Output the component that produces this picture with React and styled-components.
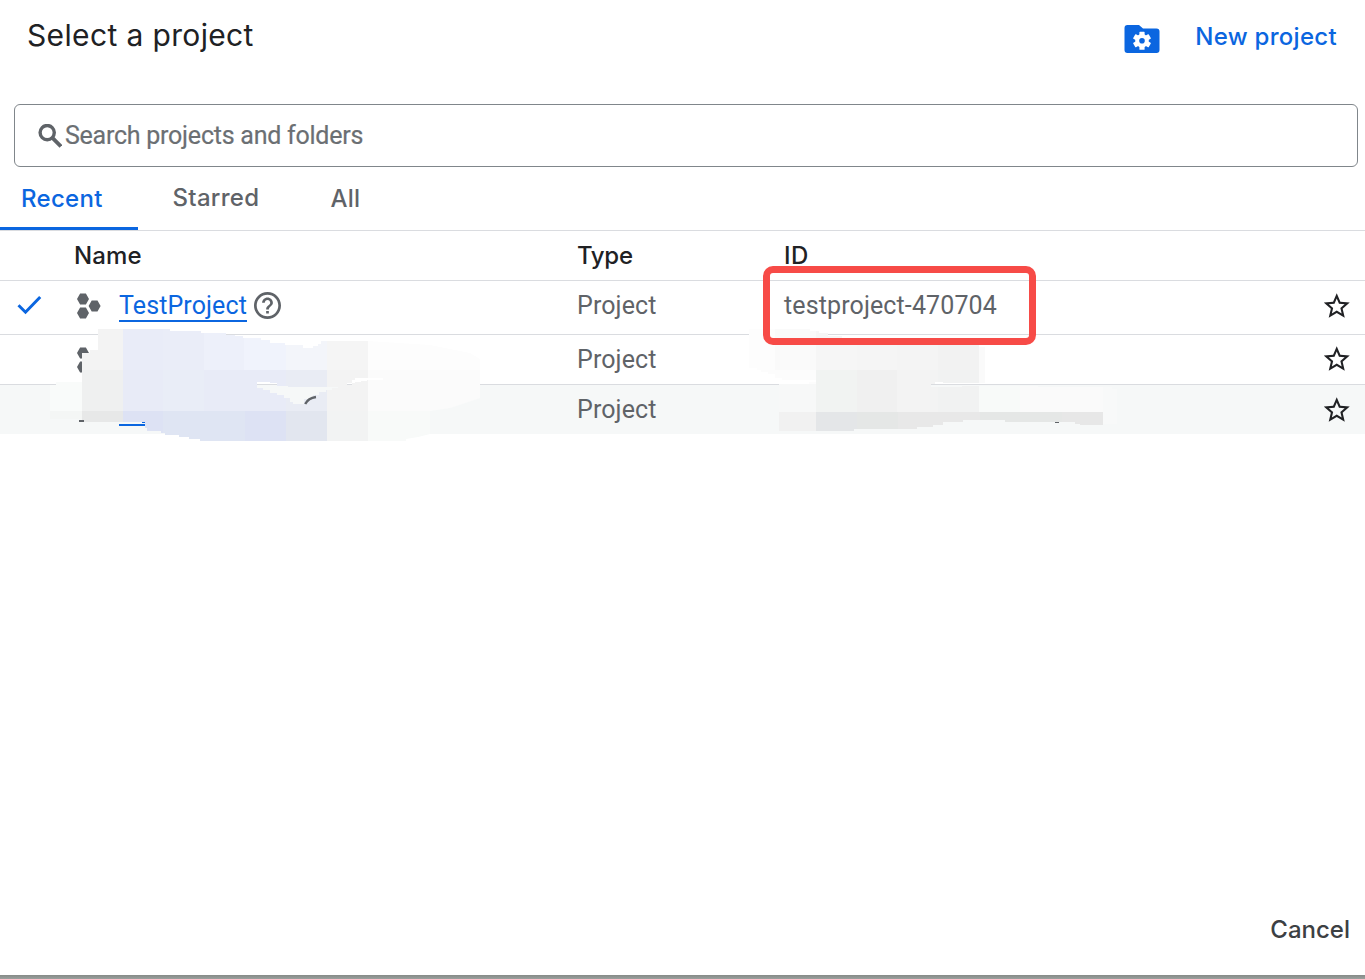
import React from "react";
import styled, { createGlobalStyle } from "styled-components";

const GlobalStyle = createGlobalStyle`
  * { box-sizing: border-box; }
  html, body { margin: 0; padding: 0; background: #fff; }
  body { font-family: Roboto, "Liberation Sans", sans-serif; overflow: hidden; }
`;

const display = `font-family: Inter, Roboto, sans-serif;`;

const Dialog = styled.main`
  position: relative;
  display: flex;
  flex-direction: column;
  width: 1365px;
  height: 979px;
  background: linear-gradient(#858a87, #9ba09d) bottom / 100% 4px no-repeat #fff;
  padding-bottom: 4px;
`;

const Header = styled.header`
  display: flex;
  align-items: flex-start;
  height: 104px;
  padding: 15px 28px 0 27px;
`;

const Title = styled.h1`
  ${display}
  flex: 1;
  margin: 0;
  font-size: 30px;
  font-weight: 400;
  line-height: 40px;
  letter-spacing: 0.36px;
  color: #202124;
`;

const NewProject = styled.button`
  ${display}
  display: flex;
  align-items: flex-start;
  gap: 35px;
  margin: 6px 0 0;
  padding: 0;
  border: 0;
  background: none;
  font-size: 24px;
  font-weight: 500;
  line-height: 32px;
  letter-spacing: 0.3px;
  color: #0b66e0;
  svg { margin-top: 4px; }
`;

const Search = styled.label`
  display: flex;
  align-items: center;
  gap: 3px;
  height: 63px;
  margin: 0 7px 0 14px;
  padding: 0 22px 0 23px;
  border: 1px solid #80868b;
  border-radius: 6px;
`;

const Placeholder = styled.span`
  font-size: 25px;
  line-height: 32px;
  color: #6b6f73;
  letter-spacing: -0.24px;
  -webkit-text-stroke: 0.2px #6b6f73;
`;

const Tabs = styled.nav`
  display: flex;
  height: 64px;
  border-bottom: 1px solid #dadce0;
`;

const Tab = styled.button`
  ${display}
  width: ${(p) => p.$width}px;
  height: 63px;
  padding: 2px 0 ${(p) => p.$lift || 0}px ${(p) => p.$inset}px;
  border: 0;
  border-bottom: 3px solid ${(p) => (p.$active ? "#0b66e0" : "transparent")};
  background: none;
  text-align: left;
  font-size: 24px;
  font-weight: 500;
  letter-spacing: ${(p) => p.$track || 0}px;
  color: ${(p) => (p.$active ? "#0b66e0" : "#5f6368")};
`;

const Row = styled.div`
  display: grid;
  grid-template-columns: 74px 503px 207px 1fr 41px;
  align-items: center;
  height: ${(p) => p.$height}px;
  padding-bottom: ${(p) => p.$lift || 0}px;
  border-bottom: ${(p) => (p.$last ? 0 : "1px solid #dadce0")};
  background: ${(p) => (p.$last ? "#f6f8f8" : "#fff")};
`;

const HeadCell = styled.span`
  ${display}
  font-size: 24px;
  font-weight: 500;
  line-height: 32px;
  color: #202124;
  letter-spacing: ${(p) => p.$track || 0}px;
`;

const Cell = styled.span`
  font-size: 25px;
  line-height: 32px;
  color: #5f6368;
  letter-spacing: 0.12px;
`;

const CheckCell = styled.span`
  display: flex;
  padding: 0 0 2px 17px;
`;

const NameCell = styled.span`
  display: flex;
  align-items: center;
  padding: 0 0 ${(p) => p.$lift || 0}px 3px;
`;

const ProjectLink = styled.a`
  margin: 1px 7px 0 18px;
  font-size: 25px;
  line-height: 31px;
  height: 32px;
  border-bottom: 2px solid #0b66e0;
  color: #0b66e0;
  letter-spacing: 0.1px;
`;

const Footer = styled.footer`
  display: flex;
  justify-content: flex-end;
  margin-top: auto;
  padding: 0 15px 29px 0;
`;

const Cancel = styled.button`
  font: 500 24px/32px Inter, Roboto, sans-serif;
  padding: 0;
  border: 0;
  background: none;
  color: #3c4043;
`;

const Highlight = styled.div`
  position: absolute;
  left: 763px;
  top: 266px;
  width: 273px;
  height: 79px;
  border: 7px solid #f74b47;
  border-radius: 10px;
`;

const Redaction = styled.svg`
  position: absolute;
  left: 0;
  top: 320px;
  pointer-events: none;
`;

const StarIcon = styled.svg`
  margin-bottom: ${(p) => p.$lift || 0}px;
`;

const FolderGear = () => (
  <svg width="36" height="28" viewBox="0 0 36 28">
    <path fill="#0b66e0" d="M3.5 0H15l4 3.5h13.5a3 3 0 0 1 3 3V25a3 3 0 0 1-3 3h-29a3 3 0 0 1-3-3V3a3 3 0 0 1 3-3z" />
    <g transform="translate(18 15.8)" fill="#fff">
      <circle r="6.8" />
      {[0, 60, 120].map((a) => (
        <rect key={a} x="-2.6" y="-9" width="5.2" height="18" rx=".6" transform={`rotate(${a})`} />
      ))}
      <circle r="2.8" fill="#0b66e0" />
    </g>
  </svg>
);

const SearchIcon = () => (
  <svg width="24" height="24" viewBox="0 0 24 24" fill="none" stroke="#5f6368">
    <circle cx="9.2" cy="8.6" r="7.1" strokeWidth="3.4" />
    <path d="M14.2 13.7l8.7 8.7" strokeWidth="3.8" />
  </svg>
);

const Check = () => (
  <svg width="25" height="20" viewBox="0 0 25 20" fill="none" stroke="#0b66e0" strokeWidth="3">
    <path d="M1.5 10.2l7 7L23.2 2" />
  </svg>
);

const Hexagons = () => (
  <svg width="24" height="26" viewBox="0 0 24 26" fill="#5f6368">
    <path d="M3.1.5h5.8L12 6 8.9 11.4H3.1L0 6zM3.1 14.6h5.8L12 20l-3.1 5.5H3.1L0 20zM14.7 7.5h5.8l3.1 5.5-3.1 5.5h-5.8L11.6 13z" />
  </svg>
);

const Help = () => (
  <svg width="27" height="27" viewBox="2 2 20 20" fill="#5f6368">
    <path d="M11 18h2v-2h-2v2zm1-16C6.48 2 2 6.48 2 12s4.48 10 10 10 10-4.48 10-10S17.52 2 12 2zm0 18c-4.41 0-8-3.59-8-8s3.59-8 8-8 8 3.59 8 8-3.59 8-8 8zm0-14c-2.21 0-4 1.79-4 4h2c0-1.1.9-2 2-2s2 .9 2 2c0 2-3 1.75-3 5h2c0-2.25 3-2.5 3-5 0-2.21-1.79-4-4-4z" />
  </svg>
);

const Star = ({ lift }) => (
  <StarIcon $lift={lift} width="26" height="25" viewBox="2.2 2 20 19" fill="#202124">
    <path d="M22 9.24l-7.19-.62L12 2 9.19 8.63 2 9.24l5.46 4.73L5.82 21 12 17.27 18.18 21l-1.63-7.03L22 9.24zM12 15.4l-3.76 2.27 1-4.28-3.32-2.88 4.38-.38L12 6.1l1.71 4.04 4.38.38-3.32 2.88 1 4.28L12 15.4z" />
  </StarIcon>
);

const nameCells = [
  [82, 329, 41, 41, "#f3f3f3"], [123, 329, 40, 41, "#e9ecf8"], [163, 329, 41, 41, "#eaedf8"],
  [204, 329, 40, 41, "#edf0fa"], [244, 329, 42, 41, "#f0f3fc"], [286, 329, 41, 41, "#f3f5fa"],
  [327, 329, 41, 41, "#f5f5f5"], [368, 329, 112, 41, "#fdfdfd"],
  [50, 370, 32, 41, "#f9fbfa"], [82, 370, 41, 41, "#eff0f0"], [123, 370, 40, 41, "#e8ebf7"],
  [163, 370, 41, 41, "#e9edf7"], [204, 370, 82, 41, "#e8ebf7"], [286, 370, 41, 41, "#e9ecf4"],
  [327, 370, 41, 41, "#f3f3f3"], [368, 370, 112, 41, "#fbfbfb"],
  [50, 411, 32, 30, "#f4f6f5"], [82, 411, 41, 30, "#e7e8e8"], [123, 411, 40, 30, "#dde2f4"],
  [163, 411, 41, 30, "#dfe5f3"], [204, 411, 41, 30, "#dfe5f3"], [245, 411, 41, 30, "#dde2f4"],
  [286, 411, 41, 30, "#e2e6ef"], [327, 411, 41, 30, "#f2f3f3"], [368, 411, 112, 30, "#f8faf9"],
];

const idCells = [
  [749, 329, 26, 41, "#fdfdfd"], [775, 329, 41, 41, "#fafafa"], [816, 329, 41, 41, "#f6f6f6"],
  [857, 329, 40, 41, "#f5f5f5"], [897, 329, 41, 41, "#f4f4f4"], [938, 329, 41, 41, "#f2f2f2"],
  [979, 329, 6, 60, "#fafafa"], [749, 370, 67, 14, "#fcfcfc"], [779, 384, 37, 28, "#f7f8f8"],
  [816, 370, 41, 42, "#f1f3f2"], [857, 370, 40, 42, "#f0f0f0"], [897, 370, 41, 42, "#f3f3f3"],
  [938, 370, 41, 42, "#f1f2f2"], [979, 386, 41, 26, "#f8faf9"], [1020, 386, 97, 26, "#fafafa"],
  [779, 412, 37, 20, "#f1f1f1"], [816, 412, 41, 20, "#e4e6e8"], [857, 412, 41, 20, "#e5e7e6"],
  [898, 412, 82, 20, "#e8e8e8"], [980, 412, 82, 20, "#e5e7e6"], [1062, 412, 41, 20, "#e7e7e7"],
  [1103, 386, 14, 39, "#f8f9f9"],
];

const Cells = ({ data }) =>
  data.map(([x, y, w, h, c], i) => <rect key={i} x={x} y={y} width={w} height={h} fill={c} />);

const RedactedCells = () => (
  <Redaction width="1365" height="125" viewBox="0 320 1365 125" shapeRendering="crispEdges">
    <defs>
      <clipPath id="names">
        <path clipRule="evenodd" d="M98 329H170V331H201V333H226V335H235V336H243V338H261V340H270V343H285V345H303V348H313V346H318V344H321V341H368L430 345L470 353L480 359V398L450 408L430 411V434L418 437L406 439V441H200V439H189V437H179V435H165V433H161V431H147V428H145V422H82V419H50V385H56V382H82V353H90V350H98Z M257 382H270V383H277V386H288V387H338V388H332V390H326V392H319V395H313V399H304V404H293V402H290V398H284V395H277V393H270V390H263V388H257Z M347 385V383H352V380H355V378H383V380H367V381H361V382H355V383H352V385Z" />
      </clipPath>
      <clipPath id="ids">
        <path d="M749 329H810V331H819V333H828V336H842V338H979V347H985V383H943V382H935V384H931V387H962V386H1038V387H1112V389H1117V424H1103V425H1080V424H1075V422H1005V420H963V422H943V425H933V427H917V429H854V431H779V384H809V382H816V380H782V378H775V374H768V372H761V370H757V368H749Z" />
      </clipPath>
    </defs>
    <g clipPath="url(#names)"><Cells data={nameCells} /></g>
    <g clipPath="url(#ids)"><Cells data={idCells} /></g>
    <path fill="#5f6368" d="M79 420h5v2h-5zM1055 422h4v1h-4z" />
    <path fill="none" stroke="#5f6368" strokeWidth="2.4" shapeRendering="auto" d="M305.2 404q3-6 10.8-7" />
    <path fill="#0b66e0" d="M119 424h26v2h-26zM142 422h3v1h-3z" />
  </Redaction>
);

export default function App() {
  return (
    <>
      <GlobalStyle />
      <Dialog>
        <Header>
          <Title>Select a project</Title>
          <NewProject><FolderGear />New project</NewProject>
        </Header>
        <Search><SearchIcon /><Placeholder>Search projects and folders</Placeholder></Search>
        <Tabs>
          <Tab $active $width={138} $inset={21} $track={0.3}>Recent</Tab>
          <Tab $width={158} $inset={34.5} $lift={2} $track={0.3}>Starred</Tab>
          <Tab $width={100} $inset={34.5} $track={0.2}>All</Tab>
        </Tabs>
        <Row $height={50}>
          <span />
          <HeadCell $track={0.1}>Name</HeadCell>
          <HeadCell $track={-0.3}>Type</HeadCell>
          <HeadCell $track={0.4}>ID</HeadCell>
        </Row>
        <Row $height={54} $lift={3}>
          <CheckCell><Check /></CheckCell>
          <NameCell $lift={1}><Hexagons /><ProjectLink>TestProject</ProjectLink><Help /></NameCell>
          <Cell>Project</Cell>
          <Cell>testproject-470704</Cell>
          <Star lift={2} />
        </Row>
        <Row $height={50}>
          <span />
          <NameCell><Hexagons /></NameCell>
          <Cell>Project</Cell>
          <span />
          <Star lift={2} />
        </Row>
        <Row $height={49} $last>
          <span />
          <span />
          <Cell>Project</Cell>
          <span />
          <Star />
        </Row>
        <Footer><Cancel>Cancel</Cancel></Footer>
        <RedactedCells />
        <Highlight />
      </Dialog>
    </>
  );
}
